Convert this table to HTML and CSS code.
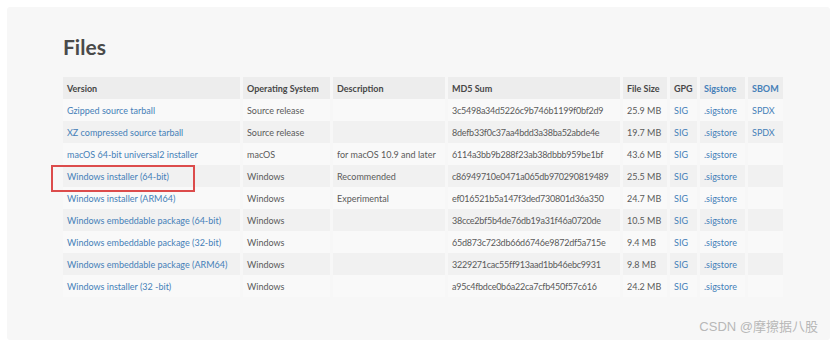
FILE: index.html
```html
<!DOCTYPE html>
<html lang="en">
<head>
  <meta charset="UTF-8" />
  <meta name="viewport" content="width=device-width, initial-scale=1.0"/>
  <title>Files</title>
  <link rel="stylesheet" href="styles.css">
</head>
<body>

  <div class="card">
    <h1>Files</h1>
    <table class="files">
      <thead>
        <tr>
          <th class="c-version">Version</th>
          <th class="c-os">Operating System</th>
          <th class="c-desc">Description</th>
          <th class="c-md5">MD5 Sum</th>
          <th class="c-size">File Size</th>
          <th class="c-gpg">GPG</th>
          <th class="c-sig"><a href="#">Sigstore</a></th>
          <th class="c-sbom"><a href="#">SBOM</a></th>
        </tr>
      </thead>
      <tbody>
        <tr>
          <td><a href="#">Gzipped source tarball</a></td>
          <td>Source release</td>
          <td></td>
          <td class="md5">3c5498a34d5226c9b746b1199f0bf2d9</td>
          <td>25.9 MB</td>
          <td><a href="#">SIG</a></td>
          <td><a href="#">.sigstore</a></td>
          <td><a href="#">SPDX</a></td>
        </tr>
        <tr>
          <td><a href="#">XZ compressed source tarball</a></td>
          <td>Source release</td>
          <td></td>
          <td class="md5">8defb33f0c37aa4bdd3a38ba52abde4e</td>
          <td>19.7 MB</td>
          <td><a href="#">SIG</a></td>
          <td><a href="#">.sigstore</a></td>
          <td><a href="#">SPDX</a></td>
        </tr>
        <tr>
          <td><a href="#">macOS 64-bit universal2 installer</a></td>
          <td>macOS</td>
          <td>for macOS 10.9 and later</td>
          <td class="md5">6114a3bb9b288f23ab38dbbb959be1bf</td>
          <td>43.6 MB</td>
          <td><a href="#">SIG</a></td>
          <td><a href="#">.sigstore</a></td>
          <td></td>
        </tr>
        <tr>
          <td class="marked"><a href="#">Windows installer (64-bit)</a></td>
          <td>Windows</td>
          <td>Recommended</td>
          <td class="md5">c86949710e0471a065db970290819489</td>
          <td>25.5 MB</td>
          <td><a href="#">SIG</a></td>
          <td><a href="#">.sigstore</a></td>
          <td></td>
        </tr>
        <tr>
          <td><a href="#">Windows installer (ARM64)</a></td>
          <td>Windows</td>
          <td>Experimental</td>
          <td class="md5">ef016521b5a147f3ded730801d36a350</td>
          <td>24.7 MB</td>
          <td><a href="#">SIG</a></td>
          <td><a href="#">.sigstore</a></td>
          <td></td>
        </tr>
        <tr>
          <td><a href="#">Windows embeddable package (64-bit)</a></td>
          <td>Windows</td>
          <td></td>
          <td class="md5">38cce2bf5b4de76db19a31f46a0720de</td>
          <td>10.5 MB</td>
          <td><a href="#">SIG</a></td>
          <td><a href="#">.sigstore</a></td>
          <td></td>
        </tr>
        <tr>
          <td><a href="#">Windows embeddable package (32-bit)</a></td>
          <td>Windows</td>
          <td></td>
          <td class="md5">65d873c723db66d6746e9872df5a715e</td>
          <td>9.4 MB</td>
          <td><a href="#">SIG</a></td>
          <td><a href="#">.sigstore</a></td>
          <td></td>
        </tr>
        <tr>
          <td><a href="#">Windows embeddable package (ARM64)</a></td>
          <td>Windows</td>
          <td></td>
          <td class="md5">3229271cac55ff913aad1bb46ebc9931</td>
          <td>9.8 MB</td>
          <td><a href="#">SIG</a></td>
          <td><a href="#">.sigstore</a></td>
          <td></td>
        </tr>
        <tr>
          <td><a href="#">Windows installer (32 -bit)</a></td>
          <td>Windows</td>
          <td></td>
          <td class="md5">a95c4fbdce0b6a22ca7cfb450f57c616</td>
          <td>24.2 MB</td>
          <td><a href="#">SIG</a></td>
          <td><a href="#">.sigstore</a></td>
          <td></td>
        </tr>
      </tbody>
    </table>
    <div class="watermark">CSDN @摩擦据八股</div>
  </div>

</body>
</html>
```

FILE: styles.css
```css
* {
  margin: 0;
  padding: 0;
  box-sizing: border-box;
}

html, body {
  height: 100%;
  background: #ffffff;
}

body {
  font-family: Lato, "Open Sans", "Noto Sans CJK SC", sans-serif;
  color: #5a5a5a;
  padding: 7px 4px 10px 7px;
}

.card {
  position: relative;
  height: 333px;
  background: #f7f7f7;
  border-radius: 3px;
  padding: 28px 56px;
}

.card h1 {
  font-size: 21px;
  line-height: 24px;
  font-weight: 700;
  color: #4a4a4a;
  margin-bottom: 18px;
}

.files {
  border-collapse: separate;
  border-spacing: 3px 0;
  margin-left: -3px;
  width: 726px;
  font-size: 9px;
  table-layout: fixed;
}

.files th,
.files td {
  height: 22px;
  padding: 0 4px;
  text-align: left;
  white-space: nowrap;
  overflow: visible;
}

.files th {
  font-weight: 700;
  color: #474747;
  background: #ededed;
}

.files tbody tr:nth-child(odd) td {
  background: #f9f9f9;
}

.files tbody tr:nth-child(even) td {
  background: #f1f1f1;
}

.files td.md5 {
  letter-spacing: -0.25px;
}

.files a {
  color: #4580b8;
  text-decoration: none;
}

.c-version { width: 177px; }
.c-os { width: 87px; }
.c-desc { width: 112px; }
.c-md5 { width: 172px; }
.c-size { width: 44px; }
.c-gpg { width: 27px; }
.c-sig { width: 45px; }
.c-sbom { width: 35px; }

.files td.marked {
  position: relative;
}

.files td.marked::after {
  content: "";
  position: absolute;
  left: -12px;
  top: 0;
  width: 140px;
  height: 23px;
  border: 2px solid #dc4c4c;
}

.watermark {
  position: absolute;
  right: 12px;
  bottom: 5px;
  font-family: "Liberation Sans", "Noto Sans CJK SC", sans-serif;
  font-size: 13px;
  color: #b8b8b8;
}
```
